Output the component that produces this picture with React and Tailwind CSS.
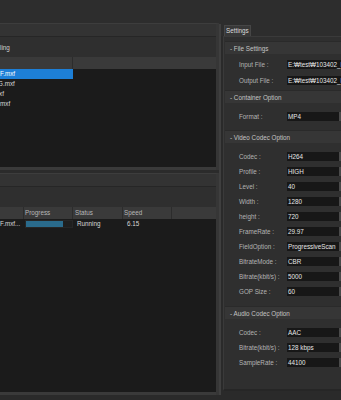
import React from "react";

function Field({ value, combo = true }) {
  return (
    <div className="w-[54px] h-[9px] flex bg-[#171717] overflow-hidden">
      <div className="flex-1 pl-[1px] whitespace-nowrap overflow-hidden text-[#e6e6e6] leading-[9px]">{value}</div>
      {combo && <div className="w-[2px] h-[9px] bg-[#4a4a4a]" />}
    </div>
  );
}

function Row({ label, value, combo = true }) {
  return (
    <div className="flex items-center h-[9px] pl-[14px]">
      <div className="w-[48px] whitespace-nowrap text-[#b4b4b4]">{label}</div>
      <Field value={value} combo={combo} />
    </div>
  );
}

function GroupHeader({ title }) {
  return (
    <div className="h-[13px] flex items-center pl-[5px] bg-[#363636] border-t border-[#2a2a2a] text-[#c4c4c4] whitespace-nowrap">
      {title}
    </div>
  );
}

export default function App() {
  return (
    <div className="w-[341px] h-[400px] overflow-hidden bg-[#2a2a2a] flex text-[6.3px] leading-[9px] font-['Liberation_Sans','Noto_Sans_CJK_KR',Arial,sans-serif] text-[#d8d8d8]">
      {/* left column */}
      <div className="w-[219px] shrink-0 flex flex-col">
        <div className="h-[23px] bg-[#2d2d2d]" />
        {/* upper panel */}
        <div className="h-[147px] flex flex-col border-t border-[#3d3d3d] bg-[#2f2f2f] border-r-[3px] border-r-[#363636]">
          <div className="h-[12px] bg-[#333333]" />
          <div className="h-[1px] bg-[#262626]" />
          <div className="h-[20px] flex items-center text-[#cfcfcf] whitespace-nowrap">ling</div>
          <div className="h-[12px] flex bg-[#3a3a3a]">
            <div className="w-[73px] border-r border-[#2c2c2c]" />
            <div className="flex-1" />
          </div>
          <div className="flex-1 bg-[#1b1b1b] flex flex-col">
            <div className="h-[10px] w-[73px] bg-[#1d7fd7] text-white whitespace-nowrap overflow-hidden leading-[10px]">F.mxf</div>
            <div className="h-[10px] w-[73px] whitespace-nowrap overflow-hidden leading-[10px]">
              <span className="inline-block -ml-[2px]">G.mxf</span>
            </div>
            <div className="h-[10px] w-[73px] whitespace-nowrap overflow-hidden leading-[10px]">
              <span className="inline-block -ml-[12.5px]">H.mxf</span>
            </div>
            <div className="h-[10px] w-[73px] whitespace-nowrap overflow-hidden leading-[10px]">
              <span className="inline-block -ml-[4.9px]">J.mxf</span>
            </div>
          </div>
          <div className="h-[3px] bg-[#3a3a3a]" />
        </div>
        <div className="h-[3px] bg-[#2b2b2b]" />
        {/* lower panel */}
        <div className="h-[222px] flex flex-col border-t border-[#3d3d3d] bg-[#2f2f2f] border-r-[3px] border-r-[#363636]">
          <div className="h-[12px] bg-[#333333]" />
          <div className="h-[1px] bg-[#262626]" />
          <div className="h-[20px]" />
          <div className="h-[12px] flex bg-[#3a3a3a] text-[#b8b8b8] leading-[12px] whitespace-nowrap">
            <div className="w-[24px] border-r border-[#2c2c2c]" />
            <div className="w-[49px] pl-[1px] border-r border-[#2c2c2c]">Progress</div>
            <div className="w-[50px] pl-[2px] border-r border-[#2c2c2c]">Status</div>
            <div className="w-[49px] pl-[1px] border-r border-[#2c2c2c]">Speed</div>
            <div className="flex-1" />
          </div>
          <div className="flex-1 bg-[#1b1b1b] flex flex-col">
            <div className="h-[10px] flex items-center whitespace-nowrap leading-[10px]">
              <div className="w-[24px] overflow-hidden">F.mxf...</div>
              <div className="w-[49px] h-[10px] py-[1px] pl-[1px]">
                <div className="h-[8px] w-full bg-[#1f1f1f] border border-[#262626] flex">
                  <div className="h-full w-[37px] bg-[#2a6b8c]" />
                </div>
              </div>
              <div className="w-[50px] pl-[4px]">Running</div>
              <div className="w-[49px] pl-[4px]">6.15</div>
            </div>
          </div>
          <div className="h-[3px] bg-[#3a3a3a]" />
        </div>
        <div className="flex-1 bg-[#2a2a2a]" />
      </div>
      {/* divider */}
      <div className="w-[2px] shrink-0 flex flex-col">
        <div className="h-[24px] bg-[#2d2d2d]" />
        <div className="h-[371px] bg-[#3f3f3f]" />
        <div className="flex-1" />
      </div>
      {/* right column */}
      <div className="flex-1 flex flex-col">
        <div className="h-[36px] flex items-end pl-[3px] bg-[#2d2d2d]">
          <div className="h-[11px] w-[27px] pl-[1px] bg-[#383838] border-t border-x border-[#464646] text-[#dcdcdc] leading-[10px] whitespace-nowrap">
            Settings
          </div>
        </div>
        <div className="h-[355px] ml-[2px] flex flex-col bg-[#2f2f2f] border-l border-t border-[#3a3a3a] border-b-2 border-b-[#262626] pl-[1px] pt-[4px]">
          <GroupHeader title="- File Settings" />
          <div className="flex flex-col pt-[6px] pb-[5px] gap-[7px]">
            <Row label="Input File :" value="E:₩test₩103402_F.mxf" combo={false} />
            <Row label="Output File :" value="E:₩test₩103402_F.mp4" combo={false} />
          </div>
          <GroupHeader title="- Container Option" />
          <div className="flex flex-col pt-[9px] pb-[9px]">
            <Row label="Format :" value="MP4" />
          </div>
          <GroupHeader title="- Video Codec Option" />
          <div className="flex flex-col pt-[9px] pb-[10px] gap-[6px]">
            <Row label="Codec :" value="H264" />
            <Row label="Profile :" value="HIGH" />
            <Row label="Level :" value="40" />
            <Row label="Width :" value="1280" />
            <Row label="height :" value="720" />
            <Row label="FrameRate :" value="29.97" />
            <Row label="FieldOption :" value="ProgressiveScan" />
            <Row label="BitrateMode :" value="CBR" />
            <Row label="Bitrate(kbit/s) :" value="5000" />
            <Row label="GOP Size :" value="60" />
          </div>
          <GroupHeader title="- Audio Codec Option" />
          <div className="flex flex-col pt-[9px] gap-[6px]">
            <Row label="Codec :" value="AAC" />
            <Row label="Bitrate(kbit/s) :" value="128 kbps" />
            <Row label="SampleRate :" value="44100" />
          </div>
        </div>
        <div className="flex-1 bg-[#2a2a2a]" />
      </div>
    </div>
  );
}
